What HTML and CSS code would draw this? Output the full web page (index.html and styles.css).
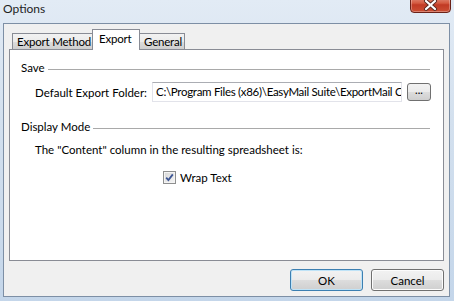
FILE: index.html
```html
<!DOCTYPE html>
<html lang="en">
<head>
    <meta charset="UTF-8">
    <title>Options</title>
    <link rel="stylesheet" href="styles.css">
</head>
<body>

    <div class="window">
        <div class="titlebar">
            <span class="title">Options</span>
            <span class="close">
                <svg width="41" height="18" viewBox="0 0 41 18">
                    <path d="M16 6 L25 14 M25 6 L16 14" stroke="#5a2a22" stroke-width="4" stroke-linecap="round"/>
                    <path d="M16 6 L25 14 M25 6 L16 14" stroke="#ffffff" stroke-width="2.2" stroke-linecap="round"/>
                </svg>
            </span>
        </div>

        <div class="client">
            <div class="tabs">
                <div class="tab tab-method">Export Method</div>
                <div class="tab tab-export active">Export</div>
                <div class="tab tab-general">General</div>
            </div>

            <div class="panel">
                <div class="group-head"><span>Save</span></div>

                <div class="folder-row">
                    <span class="folder-label">Default Export Folder:</span>
                    <div class="textbox">C:\Program Files (x86)\EasyMail Suite\ExportMail C</div>
                    <button class="browse">...</button>
                </div>

                <div class="group-head display-head"><span>Display Mode</span></div>

                <p class="hint">The "Content" column in the resulting spreadsheet is:</p>

                <label class="check">
                    <span class="box">
                        <svg width="9" height="9" viewBox="0 0 9 9">
                            <path d="M1.2 4.6 L3.4 7 L7.8 1.4" fill="none" stroke="#3d5694" stroke-width="1.8"/>
                        </svg>
                    </span>
                    Wrap Text
                </label>
            </div>

            <div class="buttons">
                <button class="btn default">OK</button>
                <button class="btn">Cancel</button>
            </div>
        </div>
    </div>

</body>
</html>
```

FILE: styles.css
```css
body {
    margin: 0;
    padding: 0;
    font-family: 'Lato', 'Noto Sans', sans-serif;
    font-size: 11.5px;
    color: #000;
}

.window {
    width: 454px;
    height: 301px;
    box-sizing: border-box;
    padding: 0 4px 4px 3px;
    display: flex;
    flex-direction: column;
    overflow: hidden;
    background: linear-gradient(to bottom, #e2ebf5 0%, #d3e0ee 40%, #c4d6ea 100%);
}

.titlebar {
    height: 23px;
    display: flex;
    justify-content: space-between;
    align-items: flex-start;
}

.title {
    font-size: 12px;
    line-height: 18px;
    color: #1e1e1e;
}

.close {
    width: 41px;
    height: 18px;
    margin-top: -5px;
    margin-right: -1px;
    box-sizing: border-box;
    border: 1px solid #6b2218;
    border-radius: 0 0 4px 4px;
    background: linear-gradient(to bottom, #e49a89 0%, #d45a40 45%, #c13a24 55%, #cc4f34 100%);
    box-shadow: inset 0 0 0 1px rgba(255, 255, 255, 0.3);
}

.close svg {
    display: block;
    margin: -1px 0 0 -1px;
}

.client {
    flex: 1;
    display: flex;
    flex-direction: column;
    border: 1px solid #7d8fa5;
    background-color: #f0f0f0;
    padding: 5px 5px 5px 5px;
}

.tabs {
    height: 20px;
    display: flex;
    align-items: flex-end;
    padding-left: 3px;
    position: relative;
    z-index: 1;
}

.tab {
    box-sizing: border-box;
    height: 16px;
    border: 1px solid #898c95;
    border-bottom: none;
    background: linear-gradient(to bottom, #f2f2f2 0%, #ebebeb 50%, #dddddd 51%, #cfcfcf 100%);
    line-height: 15px;
    padding-left: 4px;
    letter-spacing: -0.2px;
    white-space: nowrap;
    overflow: hidden;
}

.tab-method {
    width: 81px;
}

.tab-export {
    width: 48px;
    margin-left: -1px;
}

.tab-general {
    width: 46px;
    margin-left: -1px;
}

.tab.active {
    height: 21px;
    margin-bottom: -1px;
    background: #fff;
    line-height: 17px;
    padding-left: 6px;
    position: relative;
}

.panel {
    flex: 1;
    border: 1px solid #898c95;
    background-color: #fff;
    padding: 10px 13px 0 10px;
}

.group-head {
    display: flex;
    align-items: center;
    height: 16px;
    line-height: 16px;
    padding-left: 1px;
}

.group-head::after {
    content: "";
    flex: 1;
    height: 1px;
    margin-left: 3px;
    margin-top: 3px;
    background-color: #a9a9a9;
}

.folder-row {
    display: flex;
    align-items: center;
    margin-top: 6px;
    padding-left: 15px;
}

.folder-label {
    width: 117px;
    flex-shrink: 0;
    white-space: nowrap;
}

.textbox {
    width: 250px;
    height: 20px;
    flex-shrink: 0;
    box-sizing: border-box;
    border: 1px solid #e2e3ea;
    border-top-color: #abadb3;
    padding-left: 3px;
    line-height: 18px;
    letter-spacing: -0.3px;
    white-space: nowrap;
    overflow: hidden;
}

.browse {
    width: 24px;
    height: 18px;
    flex-shrink: 0;
    margin-left: 5px;
    padding: 0 0 5px 0;
    font-family: inherit;
    font-size: 11px;
    line-height: 10px;
    border: 1px solid #707070;
    border-radius: 3px;
    background: linear-gradient(to bottom, #f2f2f2 0%, #ebebeb 50%, #dddddd 51%, #cfcfcf 100%);
}

.display-head {
    margin-top: 17px;
}

.hint {
    margin: 7px 0 0 0;
    padding-left: 15px;
    line-height: 16px;
}

.check {
    display: flex;
    align-items: center;
    height: 14px;
    margin-top: 12px;
    margin-left: 143px;
}

.box {
    width: 13px;
    height: 13px;
    box-sizing: border-box;
    border: 1px solid #8e8f8f;
    background: linear-gradient(135deg, #d6d6d6 0%, #f6f6f6 100%);
    box-shadow: inset 0 0 0 1px #f4f4f4;
    display: flex;
    align-items: center;
    justify-content: center;
    margin-right: 4px;
}

.box svg {
    display: block;
}

.buttons {
    display: flex;
    justify-content: flex-end;
    gap: 8px;
    margin-top: 8px;
    padding-right: 0;
}

.btn {
    width: 73px;
    height: 22px;
    font-family: inherit;
    font-size: 11.5px;
    color: #000;
    border: 1px solid #707070;
    border-radius: 3px;
    background: linear-gradient(to bottom, #f2f2f2 0%, #ebebeb 50%, #dddddd 51%, #cfcfcf 100%);
    box-shadow: inset 0 0 0 1px #fcfcfc;
}

.btn.default {
    border-color: #3c7fb1;
    box-shadow: inset 0 0 0 1px #bfe3f7;
}
```
